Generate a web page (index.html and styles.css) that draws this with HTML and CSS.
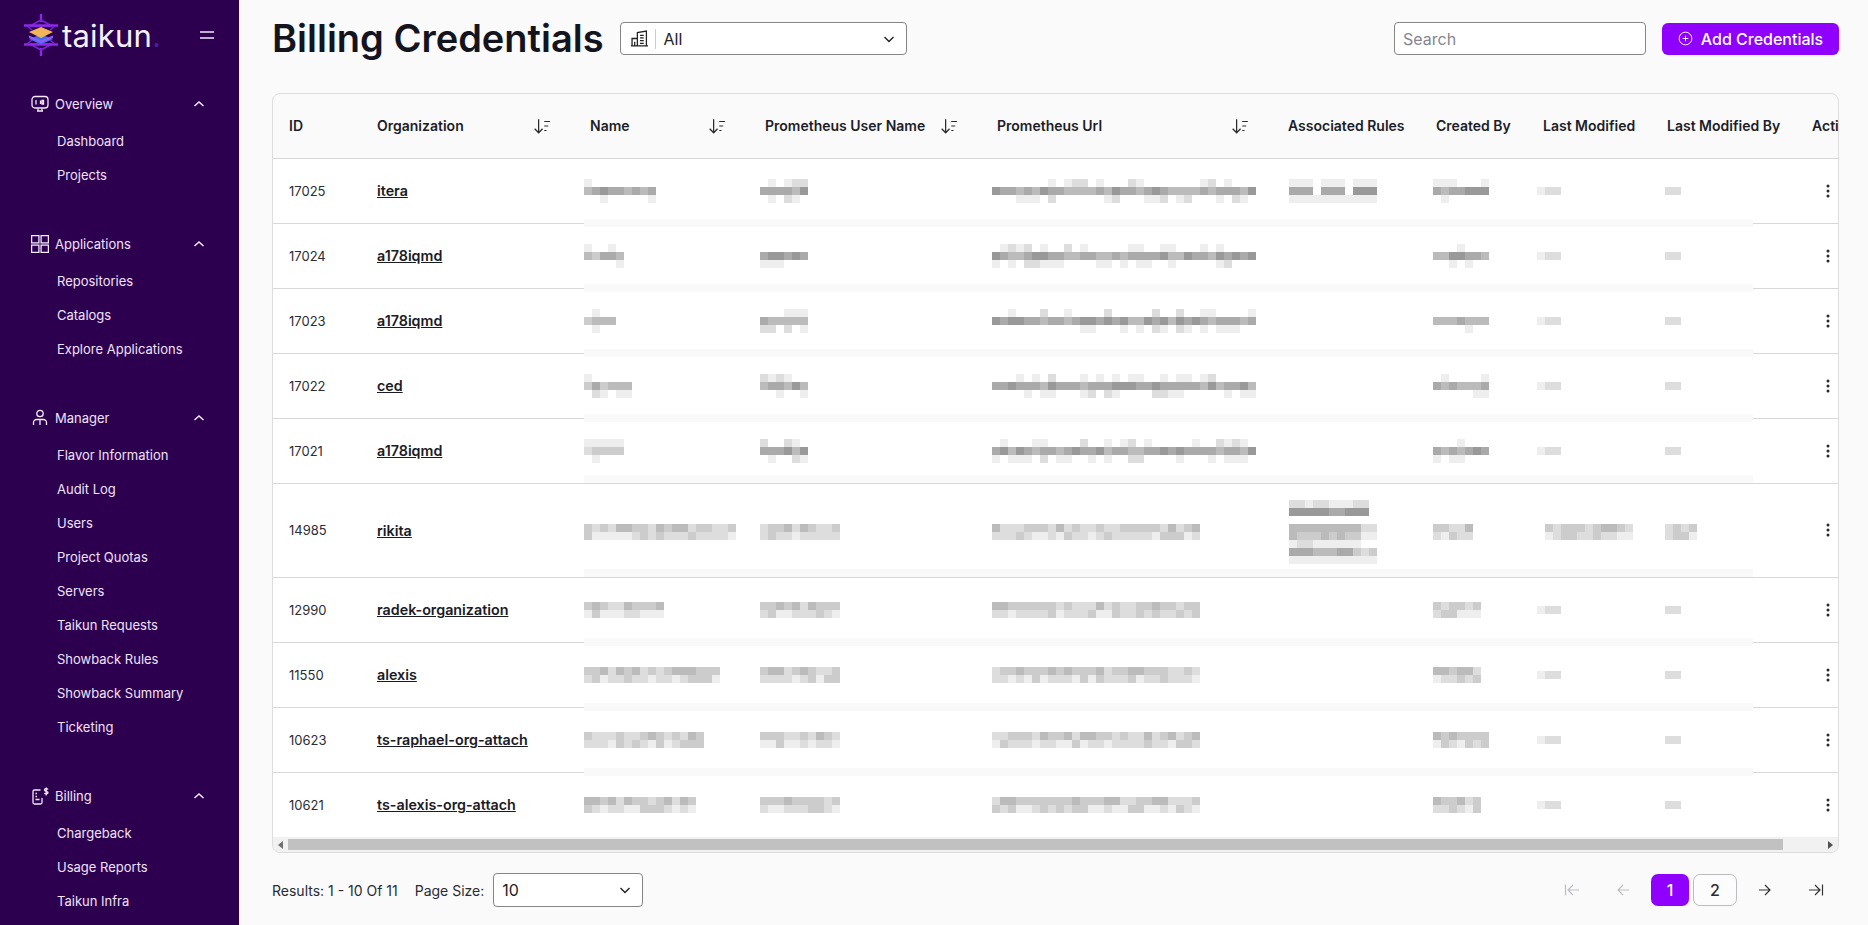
FILE: index.html
```html
<!DOCTYPE html>
<html lang="en">
<head>
<meta charset="utf-8">
<title>Billing Credentials</title>
<link rel="stylesheet" href="styles.css">
</head>
<body>
<div class="app">
  <aside class="sidebar">
    <div class="brand">
      <svg class="brand-mark" viewBox="0 0 36 44" width="36" height="44" aria-hidden="true">
        <path d="M18 1v8M18 35v8" stroke="#8a2be8" stroke-width="2.4" fill="none"/>
        <path d="M18 7L29 13H7ZM18 37L29 31H7Z" fill="none" stroke="#7a22d8" stroke-width="1.6"/>
        <path d="M1 12.500H35M1 31.500H35" stroke="#8a2be8" stroke-width="2.400" fill="none"/>
        <path d="M4 13L9 17M32 13L27 17M4 31L9 27M32 31L27 27" stroke="#7a22d8" stroke-width="1.600"/>
        <path d="M18 21.500L30 26L18 31.500L6 26Z" fill="#3f6df0"/>
        <path d="M6 22.500L18 27.500L30 22.500V25L18 30L6 25Z" fill="#8b5cf6"/>
        <path d="M18 14L30 19L18 25L6 19Z" fill="#f1b458"/>
      </svg>
      <span class="brand-name">taikun<span class="brand-dot">.</span></span>
      <svg class="burger" viewBox="0 0 16 10" width="16" height="10" aria-hidden="true"><path d="M1 2h14M1 8h14"/></svg>
    </div>
    <nav>
      <section class="group">
        <div class="group-head">
          <svg class="nav-icon" viewBox="0 0 18 18" aria-hidden="true"><rect x="1" y="1.500" width="16" height="11.500" rx="3"/><path d="M5 5v4.500M9.500 5.500v3.500M12.500 5.500v3.500h-1.500v-3.500zM6 16h6M7 13.500v2M11 13.500v2"/></svg>
          <span class="group-label">Overview</span>
          <svg class="chev" viewBox="0 0 12 8" aria-hidden="true"><path d="M1.500 6L6 2l4.500 4"/></svg>
        </div>
        <a class="nav-item">Dashboard</a>
        <a class="nav-item">Projects</a>
      </section>
      <section class="group">
        <div class="group-head">
          <svg class="nav-icon" viewBox="0 0 18 18" aria-hidden="true"><rect x="0.600" y="0.600" width="7.300" height="7.300"/><rect x="10.100" y="0.600" width="7.300" height="7.300"/><rect x="0.600" y="10.100" width="7.300" height="7.300"/><rect x="10.100" y="10.100" width="7.300" height="7.300"/></svg>
          <span class="group-label">Applications</span>
          <svg class="chev" viewBox="0 0 12 8" aria-hidden="true"><path d="M1.500 6L6 2l4.500 4"/></svg>
        </div>
        <a class="nav-item">Repositories</a>
        <a class="nav-item">Catalogs</a>
        <a class="nav-item">Explore Applications</a>
      </section>
      <section class="group">
        <div class="group-head">
          <svg class="nav-icon" viewBox="0 0 18 18" aria-hidden="true"><circle cx="9" cy="4.500" r="3.200"/><path d="M2.500 16v-2.500a3 3 0 0 1 3-3h7a3 3 0 0 1 3 3V16M9 10.500V16"/></svg>
          <span class="group-label">Manager</span>
          <svg class="chev" viewBox="0 0 12 8" aria-hidden="true"><path d="M1.500 6L6 2l4.500 4"/></svg>
        </div>
        <a class="nav-item">Flavor Information</a>
        <a class="nav-item">Audit Log</a>
        <a class="nav-item">Users</a>
        <a class="nav-item">Project Quotas</a>
        <a class="nav-item">Servers</a>
        <a class="nav-item">Taikun Requests</a>
        <a class="nav-item">Showback Rules</a>
        <a class="nav-item">Showback Summary</a>
        <a class="nav-item">Ticketing</a>
      </section>
      <section class="group">
        <div class="group-head">
          <svg class="nav-icon" viewBox="0 0 18 18" aria-hidden="true"><path d="M9.500 3H3.500a1.500 1.500 0 0 0-1.500 1.500v11A1.500 1.500 0 0 0 3.500 17h6a1.500 1.500 0 0 0 1.500-1.500V11M4.500 6.500h1.500M4.500 9.500h1.500M4.500 12.500h4"/><path d="M17 2.500c-.5-1-3.500-1.200-3.500.4 0 1.800 3.500 1 3.500 2.800 0 1.500-3 1.400-3.600.4M15.200.5v8"/></svg>
          <span class="group-label">Billing</span>
          <svg class="chev" viewBox="0 0 12 8" aria-hidden="true"><path d="M1.500 6L6 2l4.500 4"/></svg>
        </div>
        <a class="nav-item">Chargeback</a>
        <a class="nav-item">Usage Reports</a>
        <a class="nav-item">Taikun Infra</a>
      </section>
    </nav>
  </aside>

  <main class="main">
    <header class="page-head">
      <h1 class="title">Billing Credentials</h1>
      <div class="org-select">
        <svg class="org-icon" viewBox="0 0 16 16" aria-hidden="true"><path d="M1 15V8h5M6 15V2.500L14.500 1v14zM0 15h16M8.500 5h3.500M8.500 7.500h3.500M8.500 10h3.500M8.500 12.500h3.500M3.500 11v4"/></svg>
        <span class="org-divider"></span>
        <span class="org-value">All</span>
        <svg class="select-chev" viewBox="0 0 12 8" aria-hidden="true"><path d="M1.500 2L6 6.500 10.500 2"/></svg>
      </div>
      <div class="search">Search</div>
      <button class="add-btn">
        <svg viewBox="0 0 16 16" width="15" height="15" aria-hidden="true"><circle cx="8" cy="8" r="6.800"/><path d="M8 5v6M5 8h6"/></svg>
        Add Credentials
      </button>
    </header>

    <div class="table-card">
      <div class="table-clip">
        <table class="grid">
          <thead>
            <tr>
              <th class="c-id">ID</th>
              <th class="c-org"><div class="th-sort">Organization<svg class="sort" viewBox="0 0 16 16" aria-hidden="true"><path d="M5 2v12M1.500 10.500L5 14l3.500-3.500M10 4h5M10 8h3.500M10 12h2"/></svg></div></th>
              <th class="c-name"><div class="th-sort">Name<svg class="sort" viewBox="0 0 16 16" aria-hidden="true"><path d="M5 2v12M1.500 10.500L5 14l3.500-3.500M10 4h5M10 8h3.500M10 12h2"/></svg></div></th>
              <th class="c-user"><div class="th-sort">Prometheus User Name<svg class="sort" viewBox="0 0 16 16" aria-hidden="true"><path d="M5 2v12M1.500 10.500L5 14l3.500-3.500M10 4h5M10 8h3.500M10 12h2"/></svg></div></th>
              <th class="c-url"><div class="th-sort">Prometheus Url<svg class="sort" viewBox="0 0 16 16" aria-hidden="true"><path d="M5 2v12M1.500 10.500L5 14l3.500-3.500M10 4h5M10 8h3.500M10 12h2"/></svg></div></th>
              <th class="c-rules">Associated Rules</th>
              <th class="c-by">Created By</th>
              <th class="c-mod">Last Modified</th>
              <th class="c-modby">Last Modified By</th>
              <th class="c-act">Actions</th>
            </tr>
          </thead>
          <tbody>
            <tr>
              <td class="id">17025</td><td><a class="org-link">itera</a></td>
              <td><span class="mosaic m-name" data-w="9" data-p="faf" data-s="11"></span></td>
              <td><span class="mosaic m-user" data-w="6" data-p="eae" data-s="12"></span></td>
              <td><span class="mosaic m-url" data-w="33" data-p="eae" data-s="13"></span></td>
              <td><span class="mosaic m-rules" data-m="eeefeeefeee/aaafaaaf999/eeeeeeeeeee"></span></td>
              <td><span class="mosaic m-by" data-w="7" data-p="faf" data-s="14"></span></td>
              <td><span class="mosaic m-mod" data-m="fff/edd/fff"></span></td>
              <td><span class="mosaic m-modby" data-m="fff/ddf/fff"></span></td>
              <td class="act"><svg class="kebab" viewBox="0 0 16 16" aria-hidden="true"><circle cx="8" cy="3" r="1.500"/><circle cx="8" cy="8" r="1.500"/><circle cx="8" cy="13" r="1.500"/></svg></td>
            </tr>
            <tr>
              <td class="id">17024</td><td><a class="org-link">a178iqmd</a></td>
              <td><span class="mosaic m-name" data-w="5" data-p="fbf" data-s="21"></span></td>
              <td><span class="mosaic m-user" data-w="6" data-p="eae" data-s="22"></span></td>
              <td><span class="mosaic m-url" data-w="33" data-p="eae" data-s="23"></span></td>
              <td></td>
              <td><span class="mosaic m-by" data-w="7" data-p="faf" data-s="24"></span></td>
              <td><span class="mosaic m-mod" data-m="fff/edd/fff"></span></td>
              <td><span class="mosaic m-modby" data-m="fff/ddf/fff"></span></td>
              <td class="act"><svg class="kebab" viewBox="0 0 16 16" aria-hidden="true"><circle cx="8" cy="3" r="1.500"/><circle cx="8" cy="8" r="1.500"/><circle cx="8" cy="13" r="1.500"/></svg></td>
            </tr>
            <tr>
              <td class="id">17023</td><td><a class="org-link">a178iqmd</a></td>
              <td><span class="mosaic m-name" data-w="4" data-p="fbf" data-s="31"></span></td>
              <td><span class="mosaic m-user" data-w="6" data-p="eae" data-s="32"></span></td>
              <td><span class="mosaic m-url" data-w="33" data-p="eae" data-s="33"></span></td>
              <td></td>
              <td><span class="mosaic m-by" data-w="7" data-p="faf" data-s="34"></span></td>
              <td><span class="mosaic m-mod" data-m="fff/edd/fff"></span></td>
              <td><span class="mosaic m-modby" data-m="fff/ddf/fff"></span></td>
              <td class="act"><svg class="kebab" viewBox="0 0 16 16" aria-hidden="true"><circle cx="8" cy="3" r="1.500"/><circle cx="8" cy="8" r="1.500"/><circle cx="8" cy="13" r="1.500"/></svg></td>
            </tr>
            <tr>
              <td class="id">17022</td><td><a class="org-link">ced</a></td>
              <td><span class="mosaic m-name" data-w="6" data-p="ebe" data-s="41"></span></td>
              <td><span class="mosaic m-user" data-w="6" data-p="eae" data-s="42"></span></td>
              <td><span class="mosaic m-url" data-w="33" data-p="eae" data-s="43"></span></td>
              <td></td>
              <td><span class="mosaic m-by" data-w="7" data-p="faf" data-s="44"></span></td>
              <td><span class="mosaic m-mod" data-m="fff/edd/fff"></span></td>
              <td><span class="mosaic m-modby" data-m="fff/ddf/fff"></span></td>
              <td class="act"><svg class="kebab" viewBox="0 0 16 16" aria-hidden="true"><circle cx="8" cy="3" r="1.500"/><circle cx="8" cy="8" r="1.500"/><circle cx="8" cy="13" r="1.500"/></svg></td>
            </tr>
            <tr class="band-up">
              <td class="id">17021</td><td><a class="org-link">a178iqmd</a></td>
              <td><span class="mosaic m-name" data-w="5" data-p="ece" data-s="51"></span></td>
              <td><span class="mosaic m-user" data-w="6" data-p="eae" data-s="52"></span></td>
              <td><span class="mosaic m-url" data-w="33" data-p="eae" data-s="53"></span></td>
              <td></td>
              <td><span class="mosaic m-by" data-w="7" data-p="faf" data-s="54"></span></td>
              <td><span class="mosaic m-mod" data-m="fff/edd/fff"></span></td>
              <td><span class="mosaic m-modby" data-m="fff/ddf/fff"></span></td>
              <td class="act"><svg class="kebab" viewBox="0 0 16 16" aria-hidden="true"><circle cx="8" cy="3" r="1.500"/><circle cx="8" cy="8" r="1.500"/><circle cx="8" cy="13" r="1.500"/></svg></td>
            </tr>
            <tr class="row-tall band-up">
              <td class="id">14985</td><td><a class="org-link">rikita</a></td>
              <td><span class="mosaic m-name" data-w="19" data-p="cd" data-s="61"></span></td>
              <td><span class="mosaic m-user" data-w="10" data-p="cd" data-s="62"></span></td>
              <td><span class="mosaic m-url" data-w="26" data-p="cd" data-s="63"></span></td>
              <td><span class="mosaic m-rules" data-m="ddeddeeedd/99999aa999/ffffffffff/bbbbbbbbbdd/bcccbcbccee/eddeeeeeeff/aaabbbaacdc/eeeeeeeeeee"></span></td>
              <td><span class="mosaic m-by" data-w="5" data-p="cd" data-s="64"></span></td>
              <td><span class="mosaic m-mod m-wide" data-w="11" data-p="cd" data-s="65"></span></td>
              <td><span class="mosaic m-modby" data-w="4" data-p="cd" data-s="66"></span></td>
              <td class="act"><svg class="kebab" viewBox="0 0 16 16" aria-hidden="true"><circle cx="8" cy="3" r="1.500"/><circle cx="8" cy="8" r="1.500"/><circle cx="8" cy="13" r="1.500"/></svg></td>
            </tr>
            <tr>
              <td class="id">12990</td><td><a class="org-link">radek-organization</a></td>
              <td><span class="mosaic m-name" data-w="10" data-p="cd" data-s="71"></span></td>
              <td><span class="mosaic m-user" data-w="10" data-p="cd" data-s="72"></span></td>
              <td><span class="mosaic m-url" data-w="26" data-p="cd" data-s="73"></span></td>
              <td></td>
              <td><span class="mosaic m-by" data-w="6" data-p="cd" data-s="74"></span></td>
              <td><span class="mosaic m-mod" data-m="fff/edd/fff"></span></td>
              <td><span class="mosaic m-modby" data-m="fff/ddf/fff"></span></td>
              <td class="act"><svg class="kebab" viewBox="0 0 16 16" aria-hidden="true"><circle cx="8" cy="3" r="1.500"/><circle cx="8" cy="8" r="1.500"/><circle cx="8" cy="13" r="1.500"/></svg></td>
            </tr>
            <tr>
              <td class="id">11550</td><td><a class="org-link">alexis</a></td>
              <td><span class="mosaic m-name" data-w="17" data-p="cd" data-s="81"></span></td>
              <td><span class="mosaic m-user" data-w="10" data-p="cd" data-s="82"></span></td>
              <td><span class="mosaic m-url" data-w="26" data-p="cd" data-s="83"></span></td>
              <td></td>
              <td><span class="mosaic m-by" data-w="6" data-p="cd" data-s="84"></span></td>
              <td><span class="mosaic m-mod" data-m="fff/edd/fff"></span></td>
              <td><span class="mosaic m-modby" data-m="fff/ddf/fff"></span></td>
              <td class="act"><svg class="kebab" viewBox="0 0 16 16" aria-hidden="true"><circle cx="8" cy="3" r="1.500"/><circle cx="8" cy="8" r="1.500"/><circle cx="8" cy="13" r="1.500"/></svg></td>
            </tr>
            <tr>
              <td class="id">10623</td><td><a class="org-link">ts-raphael-org-attach</a></td>
              <td><span class="mosaic m-name" data-w="15" data-p="cd" data-s="91"></span></td>
              <td><span class="mosaic m-user" data-w="10" data-p="cd" data-s="92"></span></td>
              <td><span class="mosaic m-url" data-w="26" data-p="cd" data-s="93"></span></td>
              <td></td>
              <td><span class="mosaic m-by" data-w="7" data-p="cd" data-s="94"></span></td>
              <td><span class="mosaic m-mod" data-m="fff/edd/fff"></span></td>
              <td><span class="mosaic m-modby" data-m="fff/ddf/fff"></span></td>
              <td class="act"><svg class="kebab" viewBox="0 0 16 16" aria-hidden="true"><circle cx="8" cy="3" r="1.500"/><circle cx="8" cy="8" r="1.500"/><circle cx="8" cy="13" r="1.500"/></svg></td>
            </tr>
            <tr class="row-last">
              <td class="id">10621</td><td><a class="org-link">ts-alexis-org-attach</a></td>
              <td><span class="mosaic m-name" data-w="14" data-p="cd" data-s="101"></span></td>
              <td><span class="mosaic m-user" data-w="10" data-p="cd" data-s="102"></span></td>
              <td><span class="mosaic m-url" data-w="26" data-p="cd" data-s="103"></span></td>
              <td></td>
              <td><span class="mosaic m-by" data-w="6" data-p="cd" data-s="104"></span></td>
              <td><span class="mosaic m-mod" data-m="fff/edd/fff"></span></td>
              <td><span class="mosaic m-modby" data-m="fff/ddf/fff"></span></td>
              <td class="act"><svg class="kebab" viewBox="0 0 16 16" aria-hidden="true"><circle cx="8" cy="3" r="1.500"/><circle cx="8" cy="8" r="1.500"/><circle cx="8" cy="13" r="1.500"/></svg></td>
            </tr>
          </tbody>
        </table>
      </div>
      <div class="hscroll">
        <span class="hs-left"></span>
        <span class="hs-thumb"></span>
        <span class="hs-right"></span>
      </div>
    </div>

    <footer class="foot">
      <span class="foot-text">Results: 1 - 10 Of 11</span>
      <span class="foot-text foot-size">Page Size:</span>
      <div class="size-select">
        <span>10</span>
        <svg class="select-chev" viewBox="0 0 12 8" aria-hidden="true"><path d="M1.500 2L6 6.500 10.500 2"/></svg>
      </div>
      <div class="pager">
        <svg class="pg-icon pg-off pg-first" viewBox="0 0 16 14" aria-hidden="true"><path d="M1.500 1.500v11M15 7H4M9 2L4 7l5 5"/></svg>
        <svg class="pg-icon pg-off pg-prev" viewBox="0 0 14 14" aria-hidden="true"><path d="M13 7H2M7 2L2 7l5 5"/></svg>
        <span class="pg-current">1</span>
        <span class="pg-num">2</span>
        <svg class="pg-icon pg-next" viewBox="0 0 14 14" aria-hidden="true"><path d="M1 7h11M7 2l5 5-5 5"/></svg>
        <svg class="pg-icon pg-last" viewBox="0 0 16 14" aria-hidden="true"><path d="M14.500 1.500v11M1 7h11M7 2l5 5-5 5"/></svg>
      </div>
    </footer>
  </main>
</div>
<script src="script.js"></script>
</body>
</html>
```
FILE: styles.css
```css
* { box-sizing: border-box; }
html, body { margin: 0; height: 100%; overflow: hidden; }
body { font-family: Inter, "Liberation Sans", sans-serif; background: #fafafa; color: #1b1b25; }

.app { display: flex; height: 925px; overflow: hidden; }

/* Sidebar */
.sidebar { width: 239px; flex: none; background: #2d004f; color: #efe3fa; overflow: hidden; }
.brand { height: 84px; display: flex; align-items: center; padding: 0 24px 14px 23px; }
.brand-mark { flex: none; }
.brand-name { margin-left: 3px; font-size: 31px; line-height: 1; color: #f7f1fc; letter-spacing: 0.2px; }
.brand-dot { color: #4a1f9a; }
.burger { margin-left: auto; fill: none; stroke: #f3e9fb; stroke-width: 1.500; }
.group { margin-bottom: 32px; }
.group-head { height: 40px; display: flex; align-items: center; padding: 0 34px 0 31px; }
.nav-icon { width: 18px; height: 18px; flex: none; fill: none; stroke: #f3e9fb; stroke-width: 1.300; }
.group-label { margin-left: 6px; font-size: 13px; }
.chev { width: 12px; height: 8px; margin-left: auto; fill: none; stroke: #f3e9fb; stroke-width: 1.500; }
.nav-item { display: flex; align-items: center; height: 34px; padding-left: 57px; font-size: 13px; }

/* Main column */
.main { flex: 1; min-width: 0; padding: 22px 29px 0 33px; }
.page-head { display: flex; align-items: center; height: 33px; margin-bottom: 38px; }
.title { margin: 0 16px 0 0; font-size: 38px; font-weight: 600; line-height: 33px; color: #14141f; white-space: nowrap; }
.org-select { width: 287px; height: 33px; display: flex; align-items: center; background: #fff; border: 1px solid #858585; border-radius: 4px; padding: 0 11px 0 10px; font-size: 16px; }
.org-icon { width: 17px; height: 17px; flex: none; fill: none; stroke: #222; stroke-width: 1.200; }
.org-divider { width: 1px; height: 20px; background: #ccc; margin: 0 8px 0 7px; }
.org-value { color: #222; }
.select-chev { width: 12px; height: 8px; margin-left: auto; fill: none; stroke: #222; stroke-width: 1.400; }
.search { width: 252px; height: 33px; margin-left: auto; display: flex; align-items: center; padding-left: 8px; background: #fff; border: 1px solid #858585; border-radius: 4px; font-size: 16px; color: #85858f; }
.add-btn { width: 177px; height: 32px; margin-left: 16px; display: flex; align-items: center; justify-content: center; gap: 8px; background: #8f00ff; color: #fff; border: 0; border-radius: 6px; font: 500 16px Inter, "Liberation Sans", sans-serif; }
.add-btn svg { fill: none; stroke: #fff; stroke-width: 1; }

/* Table */
.table-card { background: #fafafa; border: 1px solid #ddd; border-radius: 8px; overflow: hidden; height: 760px; }
.table-clip { overflow: hidden; height: 743px; }
.grid { table-layout: fixed; width: 1646px; border-collapse: collapse; }
.grid th { height: 64px; padding: 0 0 0 16px; text-align: left; font-size: 14px; font-weight: 600; color: #1d1d28; border-bottom: 1px solid #d8d8d8; white-space: nowrap; overflow: hidden; }
.c-id { width: 88px; }
.c-org { width: 213px; }
.c-name { width: 175px; }
.c-user { width: 232px; }
.c-url { width: 291px; }
.c-rules { width: 148px; }
.c-by { width: 107px; }
.c-mod { width: 124px; }
.c-modby { width: 145px; }
.c-act { width: 123px; }
.th-sort { display: flex; align-items: center; justify-content: space-between; padding-right: 23px; }
.sort { width: 18px; height: 18px; flex: none; fill: none; stroke: #2a2a2a; stroke-width: 1.100; }
.grid tbody tr { position: relative; background: #fff; }
.grid td { height: 65px; padding: 0 0 0 16px; border-bottom: 1px solid #d8d8d8; font-size: 13px; vertical-align: middle; white-space: nowrap; }
.row-tall td { height: 94px; }
.row-last td { border-bottom: 0; }
.grid tbody tr::after { content: ""; position: absolute; left: 311px; width: 1169px; top: calc(100% - 4px); height: 8px; background: #f9f9f9; z-index: 1; }
.grid tbody tr.band-up::after { top: calc(100% - 8px); }
.grid tbody tr.row-last::after { display: none; }
.id { color: #2c2c36; }
.org-link { font-size: 14.300px; font-weight: 600; color: #1b1b25; text-decoration: underline; }
.act { padding-left: 24px !important; }
.kebab { display: block; width: 16px; height: 16px; fill: #2a2a2a; }

.mosaic { display: block; position: relative; z-index: 2; }
.mosaic svg { display: block; }
.m-name { margin-left: -6px; }
.m-user { margin-left: -5px; }
.m-url { margin-left: -5px; }
.m-rules { margin-left: 1px; }
.m-by { margin-left: -3px; }
.m-mod { margin-left: -6px; }
.m-wide { margin-left: 2px; }
.m-modby { margin-left: -2px; }
.row-tall .mosaic { margin-top: 4px; }

.hscroll { height: 15px; display: flex; align-items: center; background: #f1f1f1; padding: 0 0 0 15px; position: relative; }
.hs-thumb { width: 1495px; height: 11px; background: #c1c1c1; }
.hs-left { position: absolute; left: 5px; top: 4px; border: 4px solid transparent; border-left: 0; border-right: 5px solid #6f6f6f; }
.hs-right { position: absolute; right: 5px; top: 4px; border: 4px solid transparent; border-right: 0; border-left: 5px solid #505050; }

/* Footer */
.foot { display: flex; align-items: center; height: 34px; margin-top: 20px; }
.foot-text { font-size: 14px; color: #2a2a33; }
.foot-size { margin-left: 17px; }
.size-select { width: 150px; height: 34px; margin-left: 9px; display: flex; align-items: center; padding: 0 11px 0 8px; background: #fff; border: 1px solid #858585; border-radius: 4px; font-size: 16px; color: #222; }
.pager { margin-left: auto; display: flex; align-items: center; height: 32px; padding-right: 15px; }
.pg-icon { flex: none; height: 14px; fill: none; stroke: #333; stroke-width: 1.200; }
.pg-off { stroke: #bdbdc2; }
.pg-first { width: 16px; margin-right: 36px; }
.pg-prev { width: 14px; margin-right: 21px; }
.pg-current { width: 38px; height: 32px; display: flex; align-items: center; justify-content: center; background: #8f00ff; color: #fff; border-radius: 7px; font-size: 16px; font-weight: 500; }
.pg-num { width: 44px; height: 32px; margin-left: 4px; display: flex; align-items: center; justify-content: center; background: #fcfcfc; border: 1px solid #bcbcc0; border-radius: 7px; font-size: 16px; font-weight: 500; color: #2a2a33; }
.pg-next { width: 14px; margin-left: 21px; }
.pg-last { width: 16px; margin-left: 36px; }
```
FILE: script.js
```js
// Draws the pixelated (redacted) cells from their data attributes.
const NS = 'http://www.w3.org/2000/svg';
const BLOCK = 8;

function generate(width, profile, seed) {
  let state = seed * 7919 + 17;
  const next = () => {
    state = (state * 1103515245 + 12345) & 0x7fffffff;
    return (state >> 8) / 0x7fffff;
  };
  return profile.split('').map((ch) => {
    const base = parseInt(ch, 16);
    let line = '';
    for (let i = 0; i < width; i++) {
      const r = next();
      let v;
      if (base === 15) v = r < 0.8 ? 15 : 14;
      else if (base === 14) v = r < 0.55 ? 15 : (r < 0.9 ? 14 : 13);
      else v = Math.max(0, Math.min(15, base + Math.round((r - 0.5) * 2)));
      line += v.toString(16);
    }
    return line;
  }).join('/');
}

document.querySelectorAll('.mosaic').forEach((el) => {
  const d = el.dataset;
  const matrix = (d.m || generate(+d.w, d.p, +d.s)).split('/');
  const cols = Math.max(...matrix.map((l) => l.length));
  const svg = document.createElementNS(NS, 'svg');
  svg.setAttribute('width', cols * BLOCK);
  svg.setAttribute('height', matrix.length * BLOCK);
  svg.setAttribute('shape-rendering', 'crispEdges');
  matrix.forEach((line, y) => {
    line.split('').forEach((ch, x) => {
      if (ch === 'f') return;
      const r = document.createElementNS(NS, 'rect');
      r.setAttribute('x', x * BLOCK);
      r.setAttribute('y', y * BLOCK);
      r.setAttribute('width', BLOCK);
      r.setAttribute('height', BLOCK);
      r.setAttribute('fill', '#' + ch + ch + ch);
      svg.appendChild(r);
    });
  });
  el.appendChild(svg);
});
```
